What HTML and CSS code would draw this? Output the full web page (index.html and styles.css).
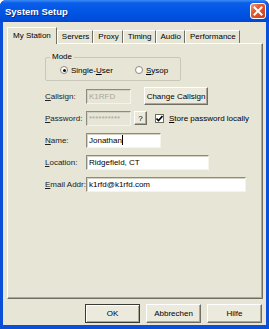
FILE: index.html
```html
<!DOCTYPE html>
<html lang="en">
<head>
  <meta charset="UTF-8" />
  <meta name="viewport" content="width=device-width, initial-scale=1.0"/>
  <title>System Setup</title>
  <link rel="stylesheet" href="styles.css">
</head>
<body>

<div class="window">
  <div class="titlebar">
    <span class="title">System Setup</span>
    <span class="close">
      <svg width="10" height="10" viewBox="0 0 10 10">
        <path d="M1.5 1.5 L8.5 8.5 M8.5 1.5 L1.5 8.5" stroke="#fff" stroke-width="2" stroke-linecap="square"/>
      </svg>
    </span>
  </div>

  <div class="client">
    <div class="tabs">
      <div class="tab active">My Station</div>
      <div class="tab">Servers</div>
      <div class="tab">Proxy</div>
      <div class="tab">Timing</div>
      <div class="tab">Audio</div>
      <div class="tab">Performance</div>
    </div>

    <div class="panel">
      <div class="group">
        <span class="legend">Mode</span>
        <label class="radio first"><span class="dot checked"></span>Single-<u>U</u>ser</label>
        <label class="radio"><span class="dot"></span><u>S</u>ysop</label>
      </div>

      <div class="form">
        <div class="row">
          <span class="lbl"><u>C</u>allsign:</span>
          <span class="field disabled w-short">K1RFD</span>
          <button class="btn change">Change Callsign</button>
        </div>
        <div class="row">
          <span class="lbl"><u>P</u>assword:</span>
          <span class="field disabled w-short">**********</span>
          <button class="btn help">?</button>
          <span class="check"><svg width="7" height="7" viewBox="0 0 7 7"><path d="M0.5 3.5 L2.5 5.5 L6.5 1" stroke="#000" stroke-width="1.6" fill="none"/></svg></span>
          <span class="check-text"><u>S</u>tore password locally</span>
        </div>
        <div class="row">
          <span class="lbl"><u>N</u>ame:</span>
          <span class="field w-name">Jonathan<span class="caret"></span></span>
        </div>
        <div class="row">
          <span class="lbl"><u>L</u>ocation:</span>
          <span class="field w-loc">Ridgefield, CT</span>
        </div>
        <div class="row">
          <span class="lbl"><u>E</u>mail Addr:</span>
          <span class="field w-mail">k1rfd@k1rfd.com</span>
        </div>
      </div>
    </div>

    <div class="buttons">
      <button class="btn dlg default">OK</button>
      <button class="btn dlg">Abbrechen</button>
      <button class="btn dlg">Hilfe</button>
    </div>
  </div>
</div>

</body>
</html>
```

FILE: styles.css
```css
* { box-sizing: border-box; }
body {
  margin: 0;
  font-family: 'Liberation Sans', Arial, sans-serif;
  font-size: 8px;
  color: #000;
  background: #fff;
}
.window {
  width: 269px;
  height: 329px;
  background: #0b4fd9;
  border-radius: 6px 6px 0 0;
  display: flex;
  flex-direction: column;
  overflow: hidden;
}
.titlebar {
  height: 22px;
  flex-shrink: 0;
  display: flex;
  align-items: center;
  justify-content: space-between;
  padding: 0 3px 0 5px;
  background: linear-gradient(#3a8cf6 0, #0a5ee9 3px, #0257e6 10px, #0050df 17px, #0046d2 22px);
}
.title {
  color: #fff;
  font-weight: bold;
  font-size: 9.5px;
  text-shadow: 1px 1px #0a2f8c;
}
.close {
  width: 16px;
  height: 16px;
  border: 1px solid #fff;
  border-radius: 3px;
  background: linear-gradient(135deg, #f19a7c 0, #e2582f 40%, #c9401c 100%);
  display: flex;
  align-items: center;
  justify-content: center;
}
.client {
  flex: 1;
  margin: 0 3px 4px 3px;
  background: #e6e5d6;
  padding: 5px 3px 0 4px;
  display: flex;
  flex-direction: column;
}
.tabs {
  height: 16px;
  display: flex;
  align-items: flex-end;
  position: relative;
  z-index: 1;
}
.tab {
  height: 13px;
  padding: 0 3px 0 4px;
  line-height: 12px;
  border-top: 1px solid #fff;
  border-left: 1px solid #fff;
  border-right: 1px solid #716f64;
  background: #e6e5d6;
  white-space: nowrap;
}
.tab.active {
  height: 17px;
  margin-bottom: -1px;
  padding: 0 5px;
  line-height: 15px;
}
.panel {
  height: 256px;
  width: 256px;
  border-top: 1px solid #fff;
  border-left: 1px solid #fff;
  border-right: 1px solid #716f64;
  border-bottom: 1px solid #716f64;
  box-shadow: inset -1px -1px #aca899;
  padding: 13px 0 0 37px;
}
.group {
  position: relative;
  width: 136px;
  height: 24px;
  border: 1px solid #c9c7b8;
  border-radius: 2px;
  display: flex;
  align-items: center;
  padding: 2px 0 0 14px;
}
.legend {
  position: absolute;
  top: -6px;
  left: 4px;
  padding: 0 2px;
  background: #e6e5d6;
}
.radio {
  display: flex;
  align-items: center;
}
.radio.first { width: 75px; }
.dot {
  width: 8px;
  height: 8px;
  border-radius: 50%;
  border: 1px solid #8b8a80;
  background: #fff;
  margin-right: 3px;
  display: flex;
  align-items: center;
  justify-content: center;
}
.dot.checked::after {
  content: "";
  width: 3px;
  height: 3px;
  border-radius: 50%;
  background: #111;
}
.form {
  margin-top: 4px;
}
.row {
  height: 22px;
  display: flex;
  align-items: center;
}
.lbl {
  width: 41px;
  color: #222;
}
.field {
  height: 15px;
  line-height: 13px;
  padding-left: 2px;
  background: #fff;
  border-top: 1px solid #8d8b80;
  border-left: 1px solid #8d8b80;
  border-right: 1px solid #f4f3ec;
  border-bottom: 1px solid #f4f3ec;
  box-shadow: inset 1px 1px #d4d1c3;
  white-space: nowrap;
  display: flex;
  align-items: center;
}
.field.disabled {
  background: #e6e5d6;
  color: #a8a79c;
}
.w-short { width: 45px; }
.w-name { width: 75px; }
.w-loc { width: 123px; }
.w-mail { width: 160px; }
.caret {
  width: 1px;
  height: 10px;
  background: #000;
}
.btn {
  font-family: inherit;
  font-size: 8px;
  color: #000;
  padding: 0;
  background: #ebeadd;
  border-top: 1px solid #fff;
  border-left: 1px solid #fff;
  border-right: 1px solid #716f64;
  border-bottom: 1px solid #716f64;
  box-shadow: inset -1px -1px #aca899;
}
.btn.change {
  margin-left: 13px;
  width: 64px;
  height: 18px;
}
.btn.help {
  margin-left: 3px;
  width: 13px;
  height: 14px;
}
.check {
  margin-left: 8px;
  width: 9px;
  height: 9px;
  background: #fff;
  border: 1px solid #6d6c62;
  display: flex;
  align-items: center;
  justify-content: center;
}
.check-text {
  margin-left: 5px;
  white-space: nowrap;
}
.buttons {
  margin-top: 5px;
  padding-right: 1px;
  display: flex;
  justify-content: flex-end;
  gap: 6px;
}
.btn.dlg {
  width: 55px;
  height: 19px;
}
.btn.default {
  border: 1px solid #3a3a36;
  box-shadow: inset 1px 1px #fff, inset -1px -1px #aca899;
}
```
